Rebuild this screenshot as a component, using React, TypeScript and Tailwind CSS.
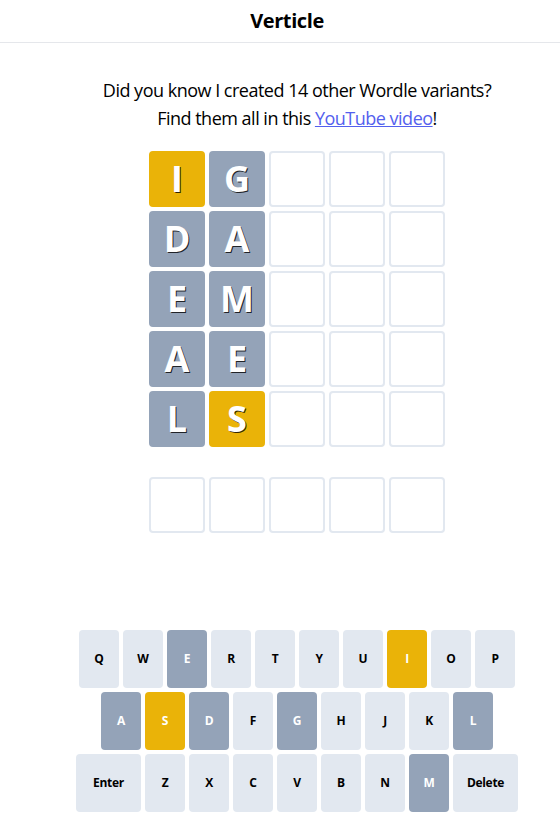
const GUESSES: { l: string; s: 'present' | 'absent' }[][] = [
  [{ l: 'I', s: 'present' }, { l: 'G', s: 'absent' }],
  [{ l: 'D', s: 'absent' }, { l: 'A', s: 'absent' }],
  [{ l: 'E', s: 'absent' }, { l: 'M', s: 'absent' }],
  [{ l: 'A', s: 'absent' }, { l: 'E', s: 'absent' }],
  [{ l: 'L', s: 'absent' }, { l: 'S', s: 'present' }],
];

const KEY_STATE: Record<string, 'present' | 'absent'> = {
  E: 'absent',
  I: 'present',
  A: 'absent',
  S: 'present',
  D: 'absent',
  G: 'absent',
  L: 'absent',
  M: 'absent',
};

const ROWS = [
  ['Q', 'W', 'E', 'R', 'T', 'Y', 'U', 'I', 'O', 'P'],
  ['A', 'S', 'D', 'F', 'G', 'H', 'J', 'K', 'L'],
  ['Enter', 'Z', 'X', 'C', 'V', 'B', 'N', 'M', 'Delete'],
];

function Cell({ letter, status }: { letter?: string; status?: 'present' | 'absent' }) {
  const cls =
    status === 'present'
      ? 'bg-[#eab308] border-[#eab308] text-white'
      : status === 'absent'
        ? 'bg-[#94a3b8] border-[#94a3b8] text-white'
        : 'bg-white border-[#e2e8f0]';
  return (
    <div
      className={`w-14 h-14 border-2 rounded flex items-center justify-center text-4xl font-bold [text-shadow:1px_1px_0.5px_rgba(0,0,0,0.8)] ${cls}`}
    >
      {letter}
    </div>
  );
}

function Key({ label }: { label: string }) {
  const state = KEY_STATE[label];
  const wide = label === 'Enter' || label === 'Delete';
  const cls =
    state === 'present'
      ? 'bg-[#eab308] text-white'
      : state === 'absent'
        ? 'bg-[#94a3b8] text-white'
        : 'bg-[#e2e8f0] text-black';
  return (
    <button
      className={`${wide ? 'w-[65px]' : 'w-10'} h-[58px] rounded flex items-center justify-center text-xs font-bold tracking-[-0.3px] ${cls}`}
    >
      {label}
    </button>
  );
}

export default function App() {
  return (
    <div className="min-h-screen bg-white text-black font-['Open_Sans',sans-serif]">
      <div className="h-[43px] border-b border-gray-200 flex items-center justify-center pl-[14px]">
        <h1 className="text-xl font-bold tracking-[-0.4px]">Verticle</h1>
      </div>

      <div className="pl-[34px] flex flex-col items-center">
        <p className="mt-[33px] text-lg leading-7 text-center tracking-[-0.5px]">
          Did you know I created 14 other Wordle variants?
          <br />
          Find them all in this{' '}
          <a href="#" className="underline text-[#5360ee]">
            YouTube video
          </a>
          !
        </p>

        <div className="mt-[19px] flex flex-col gap-1">
          {GUESSES.map((row, i) => (
            <div key={i} className="flex gap-1">
              {[0, 1, 2, 3, 4].map((j) => (
                <Cell key={j} letter={row[j]?.l} status={row[j]?.s} />
              ))}
            </div>
          ))}
        </div>

        <div className="mt-[30px] flex gap-1">
          {[0, 1, 2, 3, 4].map((j) => (
            <Cell key={j} />
          ))}
        </div>

        <div className="mt-[97px] flex flex-col items-center gap-1">
          {ROWS.map((row, i) => (
            <div key={i} className="flex gap-1">
              {row.map((k) => (
                <Key key={k} label={k} />
              ))}
            </div>
          ))}
        </div>
      </div>
    </div>
  );
}
